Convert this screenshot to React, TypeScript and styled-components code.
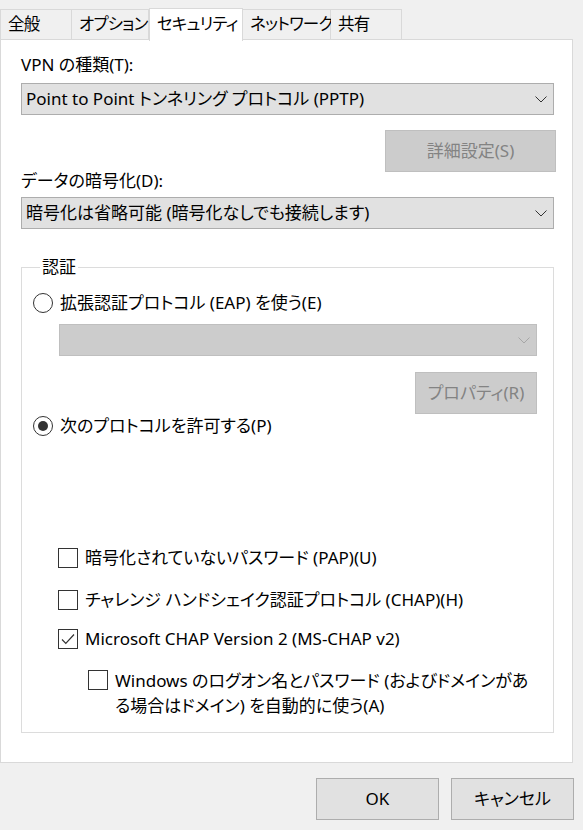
import React from 'react';
import styled, {createGlobalStyle} from 'styled-components';

const GlobalStyle = createGlobalStyle`
    html, body {
        margin: 0;
        padding: 0;
        background: #f0f0f0;
    }
    body {
        font-family: "Noto Sans", "Noto Sans CJK JP", sans-serif;
        font-size: 17px;
        font-feature-settings: "palt";
        color: #000;
    }
`;

const Window = styled.div`
    width: 583px;
    height: 830px;
    background: #f0f0f0;
    padding-top: 7px;
    box-sizing: border-box;
    overflow: hidden;
`;

const TabStrip = styled.div`
    display: flex;
    align-items: flex-end;
    height: 33px;
    position: relative;
    z-index: 1;
`;

const Tab = styled.div<{$active?: boolean; $first?: boolean; $width: number}>`
    box-sizing: border-box;
    width: ${({$width}) => $width}px;
    height: ${({$active}) => ($active ? 33 : 31)}px;
    margin-bottom: ${({$active}) => ($active ? -1 : 0)}px;
    padding: 0 0 ${({$active}) => ($active ? 3 : 1)}px 7px;
    display: flex;
    align-items: center;
    white-space: nowrap;
    font-size: 16.5px;
    letter-spacing: -0.8px;
    line-height: 20px;
    background: ${({$active}) => ($active ? '#ffffff' : '#f0f0f0')};
    border: 1px solid #d9d9d9;
    border-bottom: ${({$active}) => ($active ? 'none' : '1px solid #d9d9d9')};
    border-left-width: ${({$first, $active}) => ($first || $active ? 1 : 0)}px;
`;

const Panel = styled.div`
    box-sizing: border-box;
    width: 573px;
    height: 724px;
    margin-top: -1px;
    background: #ffffff;
    border: 1px solid #d9d9d9;
    padding: 15px 18px 0 20px;
    display: flex;
    flex-direction: column;
`;

const Label = styled.div<{$top?: number}>`
    line-height: 20px;
    white-space: nowrap;
    margin-top: ${({$top}) => $top ?? 0}px;
`;

const Combo = styled.div<{$disabled?: boolean; $top?: number}>`
    box-sizing: border-box;
    height: 32px;
    margin-top: ${({$top}) => $top ?? 0}px;
    display: flex;
    align-items: center;
    justify-content: space-between;
    padding: 0 6px 0 4px;
    background: ${({$disabled}) => ($disabled ? '#cccccc' : '#e1e1e1')};
    border: 1px solid ${({$disabled}) => ($disabled ? '#bfbfbf' : '#adadad')};
    line-height: 20px;
    white-space: nowrap;
`;

const Chevron = ({disabled}: {disabled?: boolean}) => (
    <svg width="12" height="7" viewBox="0 0 12 7">
        <path d="M0.5 0.5 L6 6 L11.5 0.5" fill="none" stroke={disabled ? '#a6a6a6' : '#333333'} strokeWidth="1"/>
    </svg>
);

const ButtonRow = styled.div<{$top?: number}>`
    display: flex;
    justify-content: flex-end;
    margin-top: ${({$top}) => $top ?? 0}px;
`;

const PushButton = styled.div<{$width: number; $disabled?: boolean; $shift?: number}>`
    box-sizing: border-box;
    width: ${({$width}) => $width}px;
    height: 42px;
    margin-right: ${({$shift}) => $shift ?? 0}px;
    display: flex;
    align-items: center;
    justify-content: center;
    background: ${({$disabled}) => ($disabled ? '#cccccc' : '#e1e1e1')};
    border: 1px solid ${({$disabled}) => ($disabled ? '#bfbfbf' : '#adadad')};
    color: ${({$disabled}) => ($disabled ? '#838383' : '#000000')};
    line-height: 20px;
    white-space: nowrap;
`;

const Group = styled.fieldset`
    margin: 28px 0 0 0;
    padding: 16px 16px 14px 11px;
    border: 1px solid #dcdcdc;
    flex: 0 0 auto;
    height: 476px;
    box-sizing: border-box;
    display: flex;
    flex-direction: column;
`;

const Legend = styled.legend`
    padding: 0 2px;
    margin-left: 7px;
    line-height: 20px;
`;

const OptionRow = styled.div<{$top?: number; $indent?: number}>`
    display: flex;
    align-items: flex-start;
    gap: 7px;
    margin-top: ${({$top}) => $top ?? 0}px;
    margin-left: ${({$indent}) => $indent ?? 0}px;
    line-height: 20px;
    white-space: nowrap;
`;

const Radio = styled.span<{$checked?: boolean}>`
    box-sizing: border-box;
    flex: 0 0 auto;
    width: 20px;
    height: 20px;
    border: 1px solid #333333;
    border-radius: 50%;
    display: flex;
    align-items: center;
    justify-content: center;
    &::after {
        content: '';
        display: ${({$checked}) => ($checked ? 'block' : 'none')};
        width: 10px;
        height: 10px;
        border-radius: 50%;
        background: #333333;
    }
`;

const Box = styled.span`
    box-sizing: border-box;
    flex: 0 0 auto;
    width: 20px;
    height: 20px;
    border: 1px solid #333333;
    display: flex;
    align-items: center;
    justify-content: center;
    background: #ffffff;
`;

const Check = ({checked}: {checked?: boolean}) => (
    <Box>
        {checked && (
            <svg width="14" height="12" viewBox="0 0 14 12">
                <path d="M1 6.5 L4.8 10.3 L13 1.5" fill="none" stroke="#333333" strokeWidth="1.2"/>
            </svg>
        )}
    </Box>
);

const Indented = styled.div<{$left: number; $top?: number}>`
    margin-left: ${({$left}) => $left}px;
    margin-top: ${({$top}) => $top ?? 0}px;
`;

const WrapText = styled.span`
    line-height: 25px;
    margin-top: -2px;
    max-width: 425px;
    white-space: normal;
`;

const Footer = styled.div`
    display: flex;
    justify-content: flex-end;
    gap: 12px;
    padding: 15px 9px 0 0;
`;

export default function App() {
    return (
        <Window>
            <GlobalStyle/>
            <TabStrip>
                <Tab $width={72} $first>全般</Tab>
                <Tab $width={77}>オプション</Tab>
                <Tab $width={94} $active>セキュリティ</Tab>
                <Tab $width={88}>ネットワーク</Tab>
                <Tab $width={71}>共有</Tab>
            </TabStrip>
            <Panel>
                <Label>VPN の種類(T):</Label>
                <Combo $top={8}>
                    <span>Point to Point トンネリング プロトコル (PPTP)</span>
                    <Chevron/>
                </Combo>
                <ButtonRow $top={15}>
                    <PushButton $width={171} $disabled $shift={-2}>詳細設定(S)</PushButton>
                </ButtonRow>
                <Label $top={-1}>データの暗号化(D):</Label>
                <Combo $top={6}>
                    <span>暗号化は省略可能 (暗号化なしでも接続します)</span>
                    <Chevron/>
                </Combo>
                <Group>
                    <Legend>認証</Legend>
                    <OptionRow>
                        <Radio/>
                        <span>拡張認証プロトコル (EAP) を使う(E)</span>
                    </OptionRow>
                    <Indented $left={26} $top={11}>
                        <Combo $disabled>
                            <span/>
                            <Chevron disabled/>
                        </Combo>
                    </Indented>
                    <ButtonRow $top={16}>
                        <PushButton $width={122} $disabled>プロパティ(R)</PushButton>
                    </ButtonRow>
                    <OptionRow $top={2}>
                        <Radio $checked/>
                        <span>次のプロトコルを許可する(P)</span>
                    </OptionRow>
                    <OptionRow $top={112} $indent={25}>
                        <Check/>
                        <span>暗号化されていないパスワード (PAP)(U)</span>
                    </OptionRow>
                    <OptionRow $top={22} $indent={25}>
                        <Check/>
                        <span>チャレンジ ハンドシェイク認証プロトコル (CHAP)(H)</span>
                    </OptionRow>
                    <OptionRow $top={19} $indent={25}>
                        <Check checked/>
                        <span>Microsoft CHAP Version 2 (MS-CHAP v2)</span>
                    </OptionRow>
                    <OptionRow $top={21} $indent={55}>
                        <Check/>
                        <WrapText>Windows のログオン名とパスワード (およびドメインがある場合はドメイン) を自動的に使う(A)</WrapText>
                    </OptionRow>
                </Group>
            </Panel>
            <Footer>
                <PushButton $width={123}>OK</PushButton>
                <PushButton $width={123}>キャンセル</PushButton>
            </Footer>
        </Window>
    );
}
